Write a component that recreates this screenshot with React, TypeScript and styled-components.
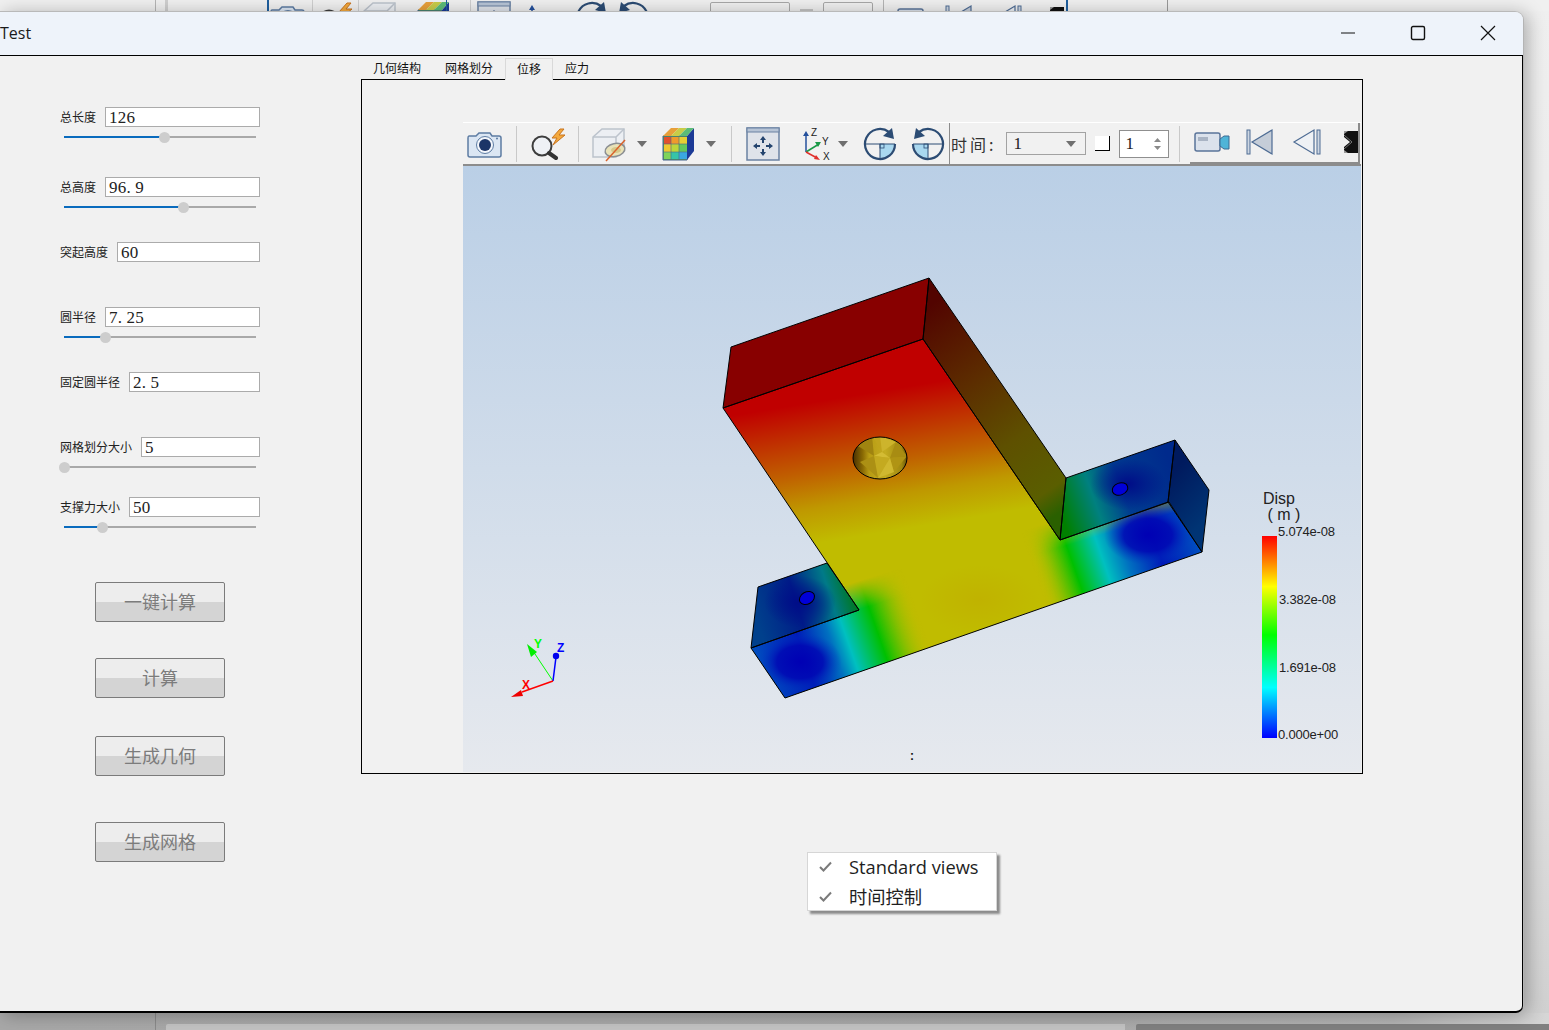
import React from 'react';
import styled, { createGlobalStyle } from 'styled-components';

const GlobalStyle = createGlobalStyle`
  html, body {
    margin: 0;
    padding: 0;
    background: #efefef;
  }
`;

const Page = styled.div`
  width: 1549px;
  height: 1030px;
  overflow: hidden;
  display: flex;
  flex-direction: column;
  background: linear-gradient(180deg, #efefef 0%, #e8e8e8 60%, #cfcfcf 100%);
`;

// the window behind, only its toolbar peeks out at the top
const BackStrip = styled.div`
  height: 11px;
  flex: none;
  display: flex;
  align-items: flex-start;
  overflow: hidden;
  background: #f0f0f0;
`;

const BackItem = styled.div<{ $left: number }>`
  flex: none;
  margin-left: ${p => p.$left}px;
  height: 36px;
  display: flex;
  align-items: center;
`;

const BackLine = styled.div<{ $left: number; $color: string; $wide?: number; $short?: boolean }>`
  flex: none;
  margin-left: ${p => p.$left}px;
  margin-top: ${p => (p.$short ? 9 : 0)}px;
  width: ${p => p.$wide ?? 1}px;
  height: ${p => (p.$short ? 2 : 11)}px;
  background: ${p => p.$color};
`;

const BackBox = styled.div<{ $left: number; $w: number }>`
  flex: none;
  box-sizing: border-box;
  margin: 2px 0 0 ${p => p.$left}px;
  width: ${p => p.$w}px;
  height: 20px;
  border: 1px solid #a8a8a8;
  border-radius: 2px;
`;

const Win = styled.div`
  width: 1524px;
  height: 1002px;
  flex: none;
  box-sizing: border-box;
  display: flex;
  flex-direction: column;
  position: relative;
  border-top: 1px solid #b9b9b9;
  border-right: 1px solid #b4b4b4;
  border-top-right-radius: 9px;
  border-bottom-right-radius: 8px;
  background: #f1f1f1;
  box-shadow: 4px 2px 18px rgba(0, 0, 0, 0.28);
`;

const TitleBar = styled.div`
  height: 44px;
  flex: none;
  box-sizing: border-box;
  padding-bottom: 2px;
  display: flex;
  align-items: center;
  background: #eef3fa;
  border-top-right-radius: 8px;
  border-bottom: 1px solid #000;
  font: 16px 'Open Sans', 'Liberation Sans', sans-serif;
  color: #1a1a1a;
`;

const TitleText = styled.span`
  flex: 1;
`;

const CaptionBtn = styled.div`
  width: 70px;
  display: flex;
  justify-content: center;
  align-items: center;
`;

const Body = styled.div`
  flex: 1;
  display: flex;
  min-height: 0;
  box-sizing: border-box;
  border-right: 1px solid #000;
  border-bottom: 2px solid #000;
  border-bottom-right-radius: 7px;
`;

const SidePanel = styled.div`
  width: 361px;
  flex: none;
  box-sizing: border-box;
  padding: 51px 0 0 60px;
`;

const FieldRow = styled.div<{ $gap: number }>`
  width: 200px;
  height: 20px;
  margin-top: ${p => p.$gap}px;
  display: flex;
  align-items: center;
`;

const FieldLabel = styled.span`
  flex: none;
  margin-right: 9px;
  margin-bottom: 2px;
  font: 12px 'Noto Sans CJK SC', sans-serif;
  color: #222;
`;

const FieldBox = styled.div`
  flex: 1;
  height: 20px;
  box-sizing: border-box;
  border: 1px solid #ababab;
  background: #fff;
  padding: 1px 0 0 3px;
  font: 17px/18px 'Liberation Serif', serif;
  letter-spacing: 0.2px;
  color: #222;
  white-space: pre;
`;

const SliderWrap = styled.div`
  width: 196px;
  height: 10px;
  margin-top: 5px;
  display: flex;
  align-items: center;
  padding-left: 4px;
  box-sizing: border-box;
`;

const SliderFill = styled.div<{ $w: number }>`
  width: ${p => p.$w}px;
  height: 2px;
  background: #0a6bbd;
  flex: none;
`;

const SliderKnob = styled.div`
  width: 11px;
  height: 11px;
  margin: 0 -5px 0 -6px;
  border-radius: 50%;
  background: #cdcdcd;
  flex: none;
  position: relative;
`;

const SliderRest = styled.div`
  flex: 1;
  height: 2px;
  background: #a9a9a9;
`;

const ActionBtn = styled.div<{ $gap: number }>`
  width: 130px;
  height: 40px;
  margin: ${p => p.$gap}px 0 0 35px;
  padding-bottom: 3px;
  box-sizing: border-box;
  border: 1px solid #7b7b7b;
  border-radius: 2px;
  background: linear-gradient(180deg, #ededed 0%, #ededed 50%, #d4d4d4 50%, #d4d4d4 100%);
  display: flex;
  align-items: center;
  justify-content: center;
  font: 18px 'Noto Sans CJK SC', sans-serif;
  color: #7c7c7c;
`;

const MainColumn = styled.div`
  width: 1002px;
  flex: none;
  display: flex;
  flex-direction: column;
  padding-top: 2px;
`;

const TabRow = styled.div`
  height: 21px;
  flex: none;
  display: flex;
  align-items: flex-start;
  position: relative;
  z-index: 1;
`;

const Tab = styled.div<{ $active?: boolean }>`
  box-sizing: border-box;
  padding: 0 ${p => (p.$active ? 11 : 12)}px 2px;
  height: ${p => (p.$active ? 22 : 21)}px;
  display: flex;
  align-items: center;
  font: 12px 'Noto Sans CJK SC', sans-serif;
  color: #111;
  background: ${p => (p.$active ? '#f1f1f1' : 'transparent')};
  border: ${p => (p.$active ? '1px solid #d9d9d9' : 'none')};
  border-bottom: none;
`;

const Frame = styled.div`
  width: 1002px;
  height: 695px;
  flex: none;
  box-sizing: border-box;
  border: 1px solid #000;
  padding: 42px 1px 1px 101px;
  display: flex;
  flex-direction: column;
`;

const Toolbar = styled.div`
  height: 44px;
  flex: none;
  box-sizing: border-box;
  border-top: 1px solid #fff;
  border-bottom: 2px solid #8c8c8c;
  display: flex;
  align-items: center;
  background: #f1f1f1;
`;

const ToolIcon = styled.div<{ $left?: number }>`
  flex: none;
  margin-left: ${p => p.$left ?? 0}px;
  display: flex;
  align-items: center;
`;

const ToolSep = styled.div<{ $left: number }>`
  flex: none;
  width: 1px;
  height: 36px;
  margin-left: ${p => p.$left}px;
  background: #c9c9c9;
`;

const ToolEdge = styled.div`
  flex: none;
  width: 1px;
  height: 41px;
  margin-left: 4px;
  background: #8c8c8c;
`;

const TimeLabel = styled.span`
  flex: none;
  margin-left: 1px;
  font: 16px 'Noto Sans CJK SC', sans-serif;
  color: #333;
  letter-spacing: 3px;
`;

const ComboBox = styled.div`
  flex: none;
  width: 80px;
  height: 23px;
  margin-left: 10px;
  box-sizing: border-box;
  border: 1px solid #a2a2a2;
  display: flex;
  align-items: center;
  justify-content: space-between;
  padding: 0 9px 0 6px;
  font: 17px 'Liberation Serif', serif;
  color: #222;
`;

const SpinBox = styled.div`
  flex: none;
  width: 50px;
  height: 28px;
  margin-left: 9px;
  box-sizing: border-box;
  border: 1px solid #8f8f8f;
  background: #fff;
  display: flex;
  align-items: center;
  justify-content: space-between;
  padding: 0 7px 0 5px;
  font: 17px 'Liberation Serif', serif;
  color: #222;
`;

const SpinArrows = styled.div`
  display: flex;
  flex-direction: column;
  gap: 4px;
`;

const FrameStep = styled.div`
  flex: none;
  width: 15px;
  height: 15px;
  margin-left: 9px;
  box-sizing: border-box;
  background: #fff;
  border-right: 1px solid #000;
  border-bottom: 1px solid #000;
`;

const VideoBar = styled.div`
  flex: none;
  width: 170px;
  height: 42px;
  margin-left: 10px;
  box-sizing: border-box;
  border-bottom: 3px solid #8c8c8c;
  border-right: 2px solid #8c8c8c;
  display: flex;
  align-items: center;
  overflow: hidden;
  background: #f1f1f1;
`;

const Viewer = styled.div`
  flex: 1;
  position: relative;
  background: linear-gradient(180deg, #bacfe6 0%, #e6e9ee 100%);
  overflow: hidden;
`;

const ModelCanvas = styled.svg`
  display: block;
  width: 898px;
  height: 606px;
`;

const LegendTitle = styled.div`
  position: absolute;
  left: 800px;
  top: 325px;
  font: 16px/16px 'Liberation Sans', sans-serif;
  color: #222;
  white-space: pre;
`;

const LegendBar = styled.div`
  position: absolute;
  left: 799px;
  top: 370px;
  width: 15px;
  height: 202px;
  background: linear-gradient(180deg, #ff0000 0%, #ffff00 25%, #00ff00 49%, #00ffff 75%, #0000ff 100%);
`;

const LegendValue = styled.div<{ $top: number; $left: number }>`
  position: absolute;
  left: ${p => p.$left}px;
  top: ${p => p.$top}px;
  font: 13px/14px 'Liberation Sans', sans-serif;
  letter-spacing: -0.2px;
  color: #222;
`;

const CornerMark = styled.div`
  position: absolute;
  left: 447px;
  top: 583px;
  font: bold 12px/14px 'Liberation Sans', sans-serif;
  color: #111;
`;

const Menu = styled.div`
  position: absolute;
  left: 807px;
  top: 840px;
  width: 190px;
  height: 59px;
  box-sizing: border-box;
  background: #fff;
  border: 1px solid #d6d6d6;
  box-shadow: 3px 3px 2px #8c8c8c;
`;

const MenuItem = styled.div`
  height: 30px;
  box-sizing: border-box;
  padding: 0 0 4px 11px;
  display: flex;
  align-items: center;
  font: 18px 'Open Sans', 'Noto Sans CJK SC', sans-serif;
  color: #1e1e1e;
`;

const MenuText = styled.span`
  margin-left: 17px;
  font-size: 18.3px;
`;

const BottomStrip = styled.div`
  flex: none;
  height: 17px;
  display: flex;
  align-items: flex-end;
  background: linear-gradient(90deg, #a8a8a8 0%, #aaaaaa 70%, #b4b4b4 90%, #d6d6d6 100%);
`;

const BottomDivider = styled.div`
  flex: none;
  width: 1px;
  height: 17px;
  margin-left: 155px;
  background: #8a8a8a;
`;

const BottomPane = styled.div<{ $left: number; $w: number; $color: string }>`
  flex: none;
  margin-left: ${p => p.$left}px;
  width: ${p => p.$w}px;
  height: 6px;
  background: ${p => p.$color};
  border-top-left-radius: 2px;
`;

const CameraIcon = () => (
  <svg width="36" height="30" viewBox="0 0 36 30">
    <path d="M2 7h7l3-3h11l2 3h7q2 0 2 2v17q0 2-2 2H3q-2 0-2-2V9q0-2 1-2z" fill="#dbe6f3" stroke="#5d7ca3" strokeWidth="1.5" />
    <circle cx="18" cy="16" r="8.5" fill="#f3f6fb" stroke="#5d7ca3" />
    <circle cx="18" cy="16" r="6" fill="#1c3567" />
    <circle cx="30" cy="9.5" r="1" fill="#5d7ca3" />
  </svg>
);

const ZoomBoltIcon = () => (
  <svg width="36" height="32" viewBox="0 0 36 32">
    <path d="M29 1l-8 9h5l-4 7 12-10h-6l5-6z" fill="#f4a93c" stroke="#c8741e" />
    <circle cx="11" cy="18" r="9.5" fill="#eef1f5" stroke="#3d3d3d" strokeWidth="2" />
    <path d="M18 25l7 5" stroke="#333" strokeWidth="4" strokeLinecap="round" />
  </svg>
);

const BoxSlashIcon = () => (
  <svg width="36" height="36" viewBox="0 0 36 36">
    <path d="M1 11l9-8h22v19l-8 9H1z" fill="#eceff3" stroke="#bcc3cc" strokeWidth="1.5" />
    <path d="M1 11h23v20M24 11l8-8" fill="none" stroke="#bcc3cc" strokeWidth="1.5" />
    <ellipse cx="23" cy="24" rx="10" ry="6.5" fill="#e8e2b8" stroke="#8b8f93" strokeWidth="1.5" transform="rotate(-12 23 24)" />
    <ellipse cx="24" cy="24" rx="5" ry="3" fill="#d6c98a" />
    <path d="M14 35L33 14" stroke="#d9622b" strokeWidth="1.5" />
  </svg>
);

const CubeGridIcon = () => (
  <svg width="34" height="34" viewBox="0 0 34 34">
    <path d="M1 9h24v24H1z" fill="#4fa050" stroke="#47648e" />
    <path d="M25 9l7-8v23l-7 9z" fill="#1c3a96" />
    <path d="M1 9l8-8h8l-8 8z" fill="#e8a03a" />
    <path d="M9 9l8-8h8l-8 8z" fill="#c8cc48" />
    <path d="M17 9l8-8h7l-7 8z" fill="#5cbc78" />
    <rect x="2" y="10" width="7" height="7" fill="#e2502c" />
    <rect x="9" y="10" width="8" height="7" fill="#ef9a2c" />
    <rect x="17" y="10" width="8" height="7" fill="#e6cf34" />
    <rect x="2" y="17" width="7" height="8" fill="#efc82e" />
    <rect x="9" y="17" width="8" height="8" fill="#bcd63a" />
    <rect x="17" y="17" width="8" height="8" fill="#62c85e" />
    <rect x="2" y="25" width="7" height="7" fill="#7fd45a" />
    <rect x="9" y="25" width="8" height="7" fill="#36c4a8" />
    <rect x="17" y="25" width="8" height="7" fill="#3aa8e0" />
    <path d="M9 10v23M17 10v23M1 17h24M1 25h24" stroke="#47648e" strokeWidth="0.6" />
  </svg>
);

const MoveIcon = () => (
  <svg width="34" height="34" viewBox="0 0 34 34">
    <rect x="1" y="1" width="32" height="32" fill="#dfe3ea" stroke="#6b82a3" strokeWidth="1.5" />
    <rect x="1" y="1" width="32" height="4" fill="#b7c4d6" stroke="#6b82a3" />
    <path d="M17 9l-3 4h2v3h2v-3h2zM17 29l-3-4h2v-3h2v3h2zM7 19l4-3v2h3v2h-3v2zM27 19l-4-3v2h-3v2h3v2z" fill="#24446e" />
  </svg>
);

const AxesIcon = ({ bare }: { bare?: boolean }) => (
  <svg width="34" height="34" viewBox="0 0 34 34" style={{ fontFamily: 'Liberation Sans, sans-serif', fontSize: 10 }}>
    <path d="M7 25V7" stroke="#24509c" strokeWidth="1.5" />
    <path d="M7 4l-3 5h6z" fill="#24509c" />
    <path d="M7 25l13-8" stroke="#1c9a48" strokeWidth="1.5" />
    <path d="M22 15l-6 0 3 5z" fill="#1c9a48" />
    <path d="M7 25l11 6" stroke="#e0302c" strokeWidth="1.5" />
    <path d="M21 33l-6-1 2-4z" fill="#e0302c" />
    {!bare && (
      <>
        <text x="12" y="9" fill="#222">Z</text>
        <text x="23" y="18" fill="#222">Y</text>
        <text x="24" y="33" fill="#222">X</text>
      </>
    )}
  </svg>
);

const RotateIcon = ({ flip }: { flip?: boolean }) => (
  <svg width="34" height="34" viewBox="0 0 34 34" style={flip ? { transform: 'scaleX(-1)' } : undefined}>
    <path d="M17 17h14a14 14 0 0 1-14 14z" fill="#a9d8f0" />
    <path d="M2 17h30M17 17v14" stroke="#2c4c74" strokeWidth="1" />
    <path d="M26 5A15 15 0 1 0 32 17" fill="none" stroke="#2c4c74" strokeWidth="2.2" />
    <path d="M29 1l2 11-11-3z" fill="#2c4c74" />
    <rect x="17" y="17" width="4" height="4" fill="none" stroke="#2c4c74" strokeWidth="0.8" />
  </svg>
);

const VideoIcon = () => (
  <svg width="36" height="24" viewBox="0 0 36 24">
    <rect x="1" y="3" width="25" height="18" rx="2" fill="#dbe2ec" stroke="#5a7499" strokeWidth="1.5" />
    <rect x="4" y="7" width="10" height="4" fill="#a9b4c4" />
    <path d="M26 9l4-3h5v13h-5l-4-3z" fill="#4fb4d8" stroke="#3d6a92" />
  </svg>
);

const FirstFrameIcon = () => (
  <svg width="28" height="28" viewBox="0 0 28 28">
    <rect x="1" y="2" width="3" height="24" fill="#cdd6e2" stroke="#4e6c94" />
    <path d="M26 2v24L6 14z" fill="#c5cdd8" stroke="#4e6c94" strokeWidth="1.2" />
  </svg>
);

const PrevFrameIcon = () => (
  <svg width="30" height="28" viewBox="0 0 30 28">
    <path d="M22 2v24L2 14z" fill="#eef1f5" stroke="#4e6c94" strokeWidth="1.2" />
    <rect x="25" y="2" width="3" height="24" fill="#cdd6e2" stroke="#4e6c94" />
  </svg>
);

const ChevronClip = () => (
  <svg width="14" height="22" viewBox="0 0 14 22">
    <rect width="14" height="22" fill="#111" />
    <path d="M0 6l6 5-6 5z" fill="#f1f1f1" />
    <path d="M0 4l8 7-8 7" fill="none" stroke="#777" />
    <path d="M0 0h4l-4 3zM0 22h4l-4-3z" fill="#9a9a9a" />
  </svg>
);

const SmallCaret = ({ color = '#6f6f6f', w = 10 }: { color?: string; w?: number }) => (
  <svg width={w} height="6" viewBox="0 0 10 6">
    <path d="M0 0h10L5 6z" fill={color} />
  </svg>
);

const TinyArrow = ({ up }: { up?: boolean }) => (
  <svg width="7" height="4" viewBox="0 0 7 4" style={{ display: 'block' }}>
    <path d={up ? 'M0 4h7L3.5 0z' : 'M0 0h7L3.5 4z'} fill="#8a8a8a" />
  </svg>
);

const CheckMark = () => (
  <svg width="13" height="11" viewBox="0 0 13 11">
    <path d="M1 6l3.5 3.5L12 1.5" fill="none" stroke="#7a7a7a" strokeWidth="2" />
  </svg>
);

// points are in page coordinates, the viewBox shifts them into the viewer
const tShape = '723,408 923,339 1060,540 1169,502 1202,552 785,698 751,648 859,610';
const barShape = '751,648 859,610 1060,540 1169,502 1202,552 785,698';
const barWide = '700,640 1050,500 1250,500 1250,600 785,720';

const facets = [
  ['858,446 872,436 874,456', '#a08410'],
  ['872,436 880,436 882,452', '#c0a41c'],
  ['880,436 896,442 882,452', '#cdb42c'],
  ['896,442 907,456 890,458', '#a88c12'],
  ['874,456 882,452 890,458', '#d4bc34'],
  ['874,456 890,458 878,478', '#c4aa20'],
  ['890,458 907,456 894,472', '#b09414'],
  ['878,478 890,458 894,472', '#d0b830'],
  ['860,462 874,456 878,478', '#ac9014'],
];

const ModelView = () => (
  <ModelCanvas viewBox="463 166 898 606">
    <defs>
      <linearGradient id="mainGrad" gradientUnits="userSpaceOnUse" x1="850" y1="396" x2="873" y2="534">
        <stop offset="0" stopColor="#c00000" />
        <stop offset="0.25" stopColor="#c03000" />
        <stop offset="0.5" stopColor="#c06000" />
        <stop offset="0.75" stopColor="#bf9800" />
        <stop offset="1" stopColor="#c0bc00" />
      </linearGradient>
      <linearGradient id="barGrad" gradientUnits="userSpaceOnUse" x1="770" y1="703" x2="1202" y2="552">
        <stop offset="0" stopColor="#0050c0" />
        <stop offset="0.105" stopColor="#0018b8" />
        <stop offset="0.17" stopColor="#0070c0" />
        <stop offset="0.205" stopColor="#00c0c0" />
        <stop offset="0.273" stopColor="#00c000" />
        <stop offset="0.31" stopColor="#60c000" stopOpacity="0.85" />
        <stop offset="0.37" stopColor="#c0c000" stopOpacity="0" />
        <stop offset="0.64" stopColor="#c0c000" stopOpacity="0" />
        <stop offset="0.68" stopColor="#80c000" stopOpacity="0.8" />
        <stop offset="0.725" stopColor="#00c000" />
        <stop offset="0.79" stopColor="#00c0c0" />
        <stop offset="0.84" stopColor="#0070c0" />
        <stop offset="0.91" stopColor="#0018b8" />
        <stop offset="1" stopColor="#0050c0" />
      </linearGradient>
      {/* the green bands die out just above the long edge of the bar */}
      <linearGradient id="fadeGrad" gradientUnits="userSpaceOnUse" x1="961" y1="578" x2="953" y2="552">
        <stop offset="0" stopColor="#fff" />
        <stop offset="1" stopColor="#000" />
      </linearGradient>
      <mask id="barFade" maskUnits="userSpaceOnUse" x="463" y="166" width="898" height="606">
        <rect x="463" y="166" width="898" height="606" fill="url(#fadeGrad)" />
      </mask>
      <radialGradient id="blueBlob">
        <stop offset="0" stopColor="#0000b4" />
        <stop offset="0.55" stopColor="#0008b4" stopOpacity="0.85" />
        <stop offset="1" stopColor="#0040c0" stopOpacity="0" />
      </radialGradient>
      <radialGradient id="warmBlob">
        <stop offset="0" stopColor="#c0a400" stopOpacity="0.4" />
        <stop offset="1" stopColor="#c0a400" stopOpacity="0" />
      </radialGradient>
      <linearGradient id="wallGrad" gradientUnits="userSpaceOnUse" x1="923" y1="310" x2="1063" y2="510">
        <stop offset="0" stopColor="#520400" />
        <stop offset="0.35" stopColor="#5c2c00" />
        <stop offset="0.65" stopColor="#5e5000" />
        <stop offset="0.9" stopColor="#5a5e00" />
        <stop offset="1" stopColor="#2a6000" />
      </linearGradient>
      <linearGradient id="rightTabGrad" gradientUnits="userSpaceOnUse" x1="1060" y1="510" x2="1172" y2="470">
        <stop offset="0" stopColor="#008000" />
        <stop offset="0.3" stopColor="#008080" />
        <stop offset="0.55" stopColor="#003c90" />
        <stop offset="1" stopColor="#002a8c" />
      </linearGradient>
      <linearGradient id="leftTabGrad" gradientUnits="userSpaceOnUse" x1="756" y1="617" x2="858" y2="585">
        <stop offset="0" stopColor="#00408c" />
        <stop offset="0.4" stopColor="#001c88" />
        <stop offset="0.72" stopColor="#007a88" />
        <stop offset="1" stopColor="#007800" />
      </linearGradient>
      <linearGradient id="endGrad" gradientUnits="userSpaceOnUse" x1="1165" y1="480" x2="1206" y2="520">
        <stop offset="0" stopColor="#001a5e" />
        <stop offset="1" stopColor="#003474" />
      </linearGradient>
      <radialGradient id="darkBlob">
        <stop offset="0" stopColor="#000c88" />
        <stop offset="1" stopColor="#000c88" stopOpacity="0" />
      </radialGradient>
      <linearGradient id="holeGrad" x1="0" y1="0" x2="1" y2="0">
        <stop offset="0" stopColor="#4a3000" />
        <stop offset="0.18" stopColor="#8a6a04" />
        <stop offset="0.3" stopColor="#b89c14" />
        <stop offset="0.6" stopColor="#c4ac20" />
        <stop offset="0.9" stopColor="#a08810" />
        <stop offset="1" stopColor="#6a5404" />
      </linearGradient>
      <clipPath id="tClip">
        <polygon points={tShape} />
      </clipPath>
      <clipPath id="barClip">
        <polygon points={barShape} />
      </clipPath>
      <clipPath id="rightTabClip">
        <polygon points="1066,478 1175,440 1168,502 1060,540" />
      </clipPath>
      <clipPath id="leftTabClip">
        <polygon points="827,563 758,587 751,648 859,610" />
      </clipPath>
      <clipPath id="holeClip">
        <ellipse cx="880" cy="458" rx="27" ry="21" />
      </clipPath>
    </defs>

    <polygon points="731,347 929,278 923,339 723,408" fill="#880000" />
    <polygon points="929,278 1066,478 1060,540 923,339" fill="url(#wallGrad)" />
    <polygon points="1066,478 1175,440 1168,502 1060,540" fill="url(#rightTabGrad)" />
    <g clipPath="url(#rightTabClip)">
      <ellipse cx="1128" cy="484" rx="38" ry="26" fill="url(#darkBlob)" />
    </g>
    <polygon points="1175,440 1209,490 1202,552 1168,502" fill="url(#endGrad)" />
    <polygon points="827,563 758,587 751,648 859,610" fill="url(#leftTabGrad)" />
    <g clipPath="url(#leftTabClip)">
      <ellipse cx="800" cy="602" rx="36" ry="26" fill="url(#darkBlob)" />
    </g>

    <polygon points={tShape} fill="url(#mainGrad)" />
    <g clipPath="url(#tClip)">
      <ellipse cx="980" cy="600" rx="60" ry="35" fill="url(#warmBlob)" />
      <g mask="url(#barFade)">
        <polygon points={barWide} fill="url(#barGrad)" />
      </g>
    </g>
    <g clipPath="url(#barClip)">
      <ellipse cx="800" cy="662" rx="42" ry="30" fill="url(#blueBlob)" />
      <ellipse cx="1148" cy="535" rx="44" ry="30" fill="url(#blueBlob)" />
    </g>

    <g fill="none" stroke="#000" strokeWidth="1" strokeLinejoin="round">
      <polygon points="731,347 929,278 923,339 723,408" />
      <polygon points="929,278 1066,478 1060,540 923,339" />
      <polygon points="1066,478 1175,440 1168,502 1060,540" />
      <polygon points="1175,440 1209,490 1202,552 1168,502" />
      <polygon points="827,563 758,587 751,648 859,610" />
      <polygon points={tShape} />
    </g>

    <ellipse cx="880" cy="458" rx="27" ry="21" fill="url(#holeGrad)" />
    <g clipPath="url(#holeClip)">
      {facets.map(([points, color]) => (
        <polygon key={points} points={points} fill={color} />
      ))}
    </g>
    <ellipse cx="880" cy="458" rx="27" ry="21" fill="none" stroke="#000" />

    <ellipse cx="1120" cy="489" rx="8" ry="6" fill="#0000d8" stroke="#000" transform="rotate(-20 1120 489)" />
    <ellipse cx="807" cy="598" rx="8" ry="6" fill="#0000d8" stroke="#000" transform="rotate(-30 807 598)" />

    {/* orientation triad */}
    <g>
      <path d="M553 681L531 648" stroke="#00ff00" strokeWidth="1" />
      <path d="M527 644l10 8-6 5z" fill="#00ee00" />
      <path d="M553 681L556 657" stroke="#0000ff" strokeWidth="1.5" />
      <circle cx="556" cy="656" r="3.2" fill="#0000ee" />
      <path d="M553 681L522 692" stroke="#ff0000" strokeWidth="1.5" />
      <path d="M511 697l10-7 2 6z" fill="#ee0000" />
      <text x="534" y="648" fill="#00ff00" fontSize="12" fontFamily="Liberation Sans, sans-serif" fontWeight="bold">Y</text>
      <text x="557" y="652" fill="#0000ff" fontSize="12" fontFamily="Liberation Sans, sans-serif" fontWeight="bold">Z</text>
      <text x="522" y="689" fill="#ff0000" fontSize="12" fontFamily="Liberation Sans, sans-serif" fontWeight="bold">X</text>
    </g>
  </ModelCanvas>
);

const params = [
  { label: '总长度', value: '126', gap: 0, pos: 101 },
  { label: '总高度', value: '96. 9', gap: 35, pos: 120 },
  { label: '突起高度', value: '60', gap: 30 },
  { label: '圆半径', value: '7. 25', gap: 45, pos: 42 },
  { label: '固定圆半径', value: '2. 5', gap: 30 },
  { label: '网格划分大小', value: '5', gap: 45, pos: 1 },
  { label: '支撑力大小', value: '50', gap: 25, pos: 39 },
];

const actions = [
  { label: '一键计算', gap: 50 },
  { label: '计算', gap: 36 },
  { label: '生成几何', gap: 38 },
  { label: '生成网格', gap: 46 },
];

const tabs = ['几何结构', '网格划分', '位移', '应力'];

export default function App() {
  return (
    <Page>
      <GlobalStyle />
      <BackStrip>
        <BackLine $left={155} $color="#b5b5b5" />
        <BackLine $left={9} $color="#cfcfcf" $wide={3} />
        <BackLine $left={99} $color="#1f5f9e" $wide={2} />
        <BackItem $left={1}><CameraIcon /></BackItem>
        <BackLine $left={6} $color="#cfcfcf" />
        <BackItem $left={5}><ZoomBoltIcon /></BackItem>
        <BackLine $left={4} $color="#cfcfcf" />
        <BackItem $left={4}><BoxSlashIcon /></BackItem>
        <BackItem $left={18}><CubeGridIcon /></BackItem>
        <BackLine $left={-5} $color="#1f5f9e" />
        <BackLine $left={23} $color="#cfcfcf" />
        <BackItem $left={6}><MoveIcon /></BackItem>
        <BackItem $left={14}><AxesIcon bare /></BackItem>
        <BackItem $left={16}><RotateIcon /></BackItem>
        <BackItem $left={7}><RotateIcon flip /></BackItem>
        <BackBox $left={60} $w={80} />
        <BackLine $left={10} $color="#c4c4c4" $wide={13} $short />
        <BackBox $left={10} $w={50} />
        <BackLine $left={10} $color="#b5b5b5" />
        <BackItem $left={13}><VideoIcon /></BackItem>
        <BackItem $left={12}><FirstFrameIcon /></BackItem>
        <BackItem $left={20}><PrevFrameIcon /></BackItem>
        <BackItem $left={27}><ChevronClip /></BackItem>
        <BackLine $left={2} $color="#1f5f9e" $wide={2} />
        <BackLine $left={99} $color="#9a9a9a" />
      </BackStrip>

      <Win>
        <TitleBar>
          <TitleText>Test</TitleText>
          <CaptionBtn>
            <svg width="16" height="2" viewBox="0 0 16 2"><path d="M1 1h14" stroke="#111" /></svg>
          </CaptionBtn>
          <CaptionBtn>
            <svg width="16" height="16" viewBox="0 0 16 16"><rect x="1.5" y="1.5" width="13" height="13" rx="1.5" fill="none" stroke="#111" strokeWidth="1.4" /></svg>
          </CaptionBtn>
          <CaptionBtn>
            <svg width="16" height="16" viewBox="0 0 16 16"><path d="M1 1l14 14M15 1L1 15" stroke="#111" strokeWidth="1.2" /></svg>
          </CaptionBtn>
        </TitleBar>

        <Body>
          <SidePanel>
            {params.map(p => (
              <React.Fragment key={p.label}>
                <FieldRow $gap={p.gap}>
                  <FieldLabel>{p.label}</FieldLabel>
                  <FieldBox>{p.value}</FieldBox>
                </FieldRow>
                {p.pos !== undefined && (
                  <SliderWrap>
                    <SliderFill $w={p.pos} />
                    <SliderKnob />
                    <SliderRest />
                  </SliderWrap>
                )}
              </React.Fragment>
            ))}
            {actions.map(a => (
              <ActionBtn key={a.label} $gap={a.gap}>{a.label}</ActionBtn>
            ))}
          </SidePanel>

          <MainColumn>
            <TabRow>
              {tabs.map(t => (
                <Tab key={t} $active={t === '位移'}>{t}</Tab>
              ))}
            </TabRow>
            <Frame>
              <Toolbar>
                <ToolIcon $left={4}><CameraIcon /></ToolIcon>
                <ToolSep $left={13} />
                <ToolIcon $left={14}><ZoomBoltIcon /></ToolIcon>
                <ToolSep $left={11} />
                <ToolIcon $left={13}><BoxSlashIcon /></ToolIcon>
                <ToolIcon $left={9}><SmallCaret /></ToolIcon>
                <ToolIcon $left={15}><CubeGridIcon /></ToolIcon>
                <ToolIcon $left={10}><SmallCaret /></ToolIcon>
                <ToolSep $left={15} />
                <ToolIcon $left={14}><MoveIcon /></ToolIcon>
                <ToolIcon $left={19}><AxesIcon /></ToolIcon>
                <ToolIcon $left={5}><SmallCaret /></ToolIcon>
                <ToolIcon $left={15}><RotateIcon /></ToolIcon>
                <ToolIcon $left={14}><RotateIcon flip /></ToolIcon>
                <ToolEdge />
                <TimeLabel>时间:</TimeLabel>
                <ComboBox>1<SmallCaret w={10} /></ComboBox>
                <FrameStep />
                <SpinBox>
                  1
                  <SpinArrows>
                    <TinyArrow up />
                    <TinyArrow />
                  </SpinArrows>
                </SpinBox>
                <ToolSep $left={10} />
                <VideoBar>
                  <ToolIcon $left={4}><VideoIcon /></ToolIcon>
                  <ToolIcon $left={16}><FirstFrameIcon /></ToolIcon>
                  <ToolIcon $left={18}><PrevFrameIcon /></ToolIcon>
                  <ToolIcon $left={22}><ChevronClip /></ToolIcon>
                </VideoBar>
              </Toolbar>
              <Viewer>
                <ModelView />
                <LegendTitle>{'Disp\n ( m )'}</LegendTitle>
                <LegendBar />
                <LegendValue $left={815} $top={359}>5.074e-08</LegendValue>
                <LegendValue $left={816} $top={427}>3.382e-08</LegendValue>
                <LegendValue $left={816} $top={495}>1.691e-08</LegendValue>
                <LegendValue $left={815} $top={562}>0.000e+00</LegendValue>
                <CornerMark>:</CornerMark>
              </Viewer>
            </Frame>
          </MainColumn>
        </Body>

        <Menu>
          <MenuItem><CheckMark /><MenuText>Standard views</MenuText></MenuItem>
          <MenuItem><CheckMark /><MenuText>时间控制</MenuText></MenuItem>
        </Menu>
      </Win>

      <BottomStrip>
        <BottomDivider />
        <BottomPane $left={10} $w={959} $color="#c3c3c3" />
        <BottomPane $left={11} $w={413} $color="#808080" />
      </BottomStrip>
    </Page>
  );
}
